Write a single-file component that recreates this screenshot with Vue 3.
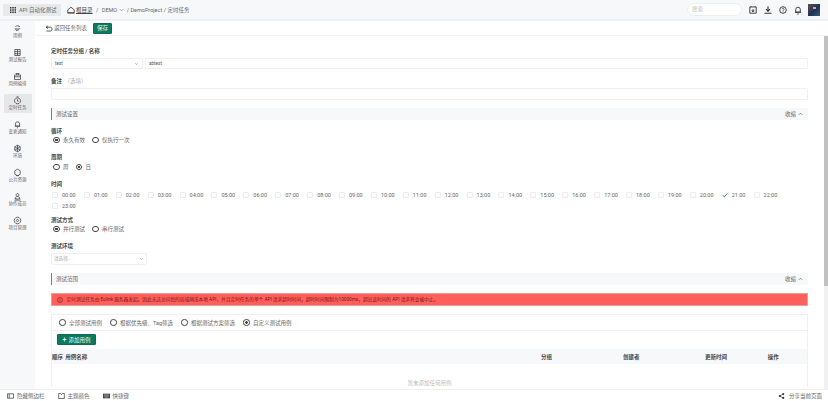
<script setup>
const navItems = [
  { label: '用例', d: 'M4 4.500c2-1.800 5-1.800 7 0M3 7.500c1 1 8 1 9 0M5 11l5-1.500M9 3l2 2M3.500 10.500l2-2', active: false },
  { label: '测试报告', d: 'M3 2.500h9v10H3zM3 6h9M3 9.500h9M7.500 2.500v10', active: false },
  { label: '用例编排', d: 'M2.500 5h10v7.500h-10zM4.500 2.500h6M2.500 8h10M6 2.500V5M9 2.500V5', active: false },
  { label: '定时任务', d: 'M7.500 3a5 5 0 1 0 .01 0M7.500 5.500v3h2M6 1.300h3', active: true },
  { label: '变更通知', d: 'M4 10V6.500a3.500 3.500 0 0 1 7 0V10zM3 10.500h9M6.500 13h2', active: false },
  { label: '环境', d: 'M7.500 2l4.500 2.600v5.800L7.500 13 3 10.400V4.600zM7.500 2v11M3 4.600l9 5.800M12 4.600l-9 5.800', active: false },
  { label: '公共资源', d: 'M7.500 2l4.500 2.600v5.800L7.500 13 3 10.400V4.600zM5 12.500h5', active: false },
  { label: '协作成员', d: 'M7.500 2.500a2.300 2.300 0 1 0 .01 0M3.500 11.500c0-2.500 1.500-4 4-4s4 1.500 4 4zM2.500 13.500h10', active: false },
  { label: '项目管理', d: 'M7.500 2a5.500 5.500 0 1 0 .01 0M7.500 5.500a2 2 0 1 0 .01 0', active: false },
]
const hours = Array.from({ length: 24 }, (_, i) => String(i).padStart(2, '0') + ':00')
const columns = [
  { label: '顺序', cls: 'c-order' },
  { label: '用例名称', cls: 'c-name' },
  { label: '分组', cls: 'c-group' },
  { label: '创建者', cls: 'c-owner' },
  { label: '更新时间', cls: 'c-time' },
  { label: '操作', cls: 'c-op' },
]
</script>

<template>
  <div class="app">
    <header class="topbar">
      <div class="brand">
        <svg class="grid-ic" viewBox="0 0 7 7"><path d="M0 0h1.700v1.700H0zM2.650 0h1.700v1.700h-1.700zM5.300 0H7v1.700H5.300zM0 2.650h1.700v1.700H0zM2.650 2.650h1.700v1.700h-1.700zM5.300 2.650H7v1.700H5.300zM0 5.300h1.700V7H0zM2.650 5.300h1.700V7h-1.700zM5.300 5.300H7V7H5.300z" fill="#333"/></svg>
        <span>API 自动化测试</span>
      </div>
      <nav class="crumbs">
        <svg class="home" viewBox="0 0 8 8"><path d="M.8 6.800V3.800L4 1.200l3.200 2.600v3zM.4 7h7.200" fill="none" stroke="#333" stroke-width=".8"/></svg>
        <span class="u">根目录</span><i>/</i><span>DEMO</span>
        <svg class="caret" viewBox="0 0 6 4"><path d="M1 1l2 2 2-2" fill="none" stroke="#777" stroke-width=".8"/></svg>
        <i class="tight">/</i><span>DemoProject</span><i class="tight">/</i><span>定时任务</span>
      </nav>
      <div class="search">搜索</div>
      <div class="tools">
        <svg viewBox="0 0 10 10"><path d="M1.800 2h6.400v6.200H1.800zM3 1.200V2M7 1.200V2M4.200 5h1.600v1.400H4.200z" fill="none" stroke="#333" stroke-width=".9"/></svg>
        <svg viewBox="0 0 10 10"><path d="M5 1.200v4.800M3 4.200 5 6.300l2-2.100M1.500 8.300h7" fill="none" stroke="#333" stroke-width="1.100"/></svg>
        <svg viewBox="0 0 10 10"><circle cx="5" cy="5" r="3.300" fill="none" stroke="#333" stroke-width=".9"/><path d="M3.900 4.200c.2-1.200 2.200-1.200 2.200 0 0 .8-1.100.8-1.100 1.700M5 6.400v.7" fill="none" stroke="#333" stroke-width=".7"/></svg>
        <svg viewBox="0 0 10 10"><path d="M2.700 7V4.500a2.300 2.300 0 0 1 4.600 0V7zM2 7.400h6M4.200 9h1.600" fill="none" stroke="#333" stroke-width=".9"/></svg>
        <div class="avatar"><b></b></div>
      </div>
    </header>

    <div class="body">
      <aside class="side">
        <div v-for="n in navItems" :key="n.label" class="nav" :class="{ active: n.active }">
          <svg viewBox="0 0 15 15"><path :d="n.d" fill="none" stroke="#444" stroke-width="1.300"/></svg>
          <span>{{ n.label }}</span>
        </div>
      </aside>

      <div class="view">
        <div class="subbar">
          <svg class="back" viewBox="0 0 8 7"><path d="M3 .8 1 2.200l2 1.400M1.200 2.200h4.300c2 0 2 3.800 0 3.800H1.500" fill="none" stroke="#333" stroke-width=".8"/></svg>
          <span class="back-txt">返回任务列表</span>
          <button class="btn save">保存</button>
        </div>

        <div class="scroller">
          <main class="content">
            <label class="lab l1">定时任务分组 / 名称</label>
            <div class="row-in">
              <div class="field sel"><span>test</span><svg viewBox="0 0 6 4"><path d="M1.500 1 3 2.800 4.500 1" fill="none" stroke="#888" stroke-width=".7"/></svg></div>
              <div class="field grow"><span>abtest</span></div>
            </div>

            <label class="lab l2">备注 <small>（选填）</small></label>
            <div class="field tall"></div>

            <div class="section"><span>测试设置</span><span class="fold">收缩 <svg viewBox="0 0 6 4"><path d="M1 3l2-2 2 2" fill="none" stroke="#555" stroke-width=".8"/></svg></span></div>

            <label class="lab l3">循环</label>
            <div class="radios"><span class="r on">永久有效</span><span class="r">仅执行一次</span></div>

            <label class="lab l4">周期</label>
            <div class="radios"><span class="r">周</span><span class="r on">日</span></div>

            <label class="lab l5">时间</label>
            <div class="hours">
              <span v-for="h in hours" :key="h" class="hour">
                <svg v-if="h === '21:00'" class="tick" viewBox="0 0 6 6"><path d="M.6 3.200 2.300 4.800 5.400 1.300" fill="none" stroke="#0b7a5e" stroke-width=".9"/></svg>
                <i v-else class="box"></i>{{ h }}
              </span>
            </div>

            <label class="lab l6">测试方式</label>
            <div class="radios"><span class="r on">并行测试</span><span class="r">串行测试</span></div>

            <label class="lab l7">测试环境</label>
            <div class="field env"><span class="ph">请选择...</span><svg viewBox="0 0 6 4"><path d="M1.500 1 3 2.800 4.500 1" fill="none" stroke="#888" stroke-width=".7"/></svg></div>

            <div class="section"><span>测试范围</span><span class="fold">收缩 <svg viewBox="0 0 6 4"><path d="M1 3l2-2 2 2" fill="none" stroke="#555" stroke-width=".8"/></svg></span></div>

            <div class="alert">
              <svg viewBox="0 0 7 7"><circle cx="3.500" cy="3.500" r="2.900" fill="none" stroke="#7a1512" stroke-width=".7"/><path d="M3.500 1.800v2.200M3.500 4.700v.6" stroke="#7a1512" stroke-width=".7"/></svg>
              <span>定时测试任务由 Eolink 服务器发起。因此无法访问您的局域网或本地 API，并且定时任务的单个 API 请求超时时间，超时时间限制为10000ms，超出该时间的 API 请求将会被中止。</span>
            </div>

            <section class="card">
              <div class="card-radios">
                <span class="r">全部测试用例</span><span class="r">根据优先级、Tag筛选</span><span class="r">根据测试方案筛选</span><span class="r on">自定义测试用例</span>
              </div>
              <div class="card-act"><button class="btn add"><b>+</b> 添加用例</button></div>
              <div class="thead"><span v-for="c in columns" :key="c.label" :class="c.cls">{{ c.label }}</span></div>
              <div class="empty">暂未添加任何用例</div>
            </section>
          </main>
          <div class="scrollbar"><div class="thumb"></div></div>
        </div>
      </div>
    </div>

    <footer class="foot">
      <span class="f"><svg viewBox="0 0 8 6"><path d="M.5.500h7v5h-7zM2.500.500v5" fill="none" stroke="#333" stroke-width=".8"/></svg>隐藏侧边栏</span>
      <span class="f"><svg viewBox="0 0 8 7"><path d="M.7.600h2L4 1.800 5.300.600h2v5.800H.7z" fill="none" stroke="#333" stroke-width=".8"/></svg>主题颜色</span>
      <span class="f"><svg viewBox="0 0 8 6"><path d="M0 .300h8v5.400H0z" fill="#444"/><path d="M1 1.700h6M1 3h6M2 4.400h4" stroke="#ddd" stroke-width=".5"/></svg>快捷键</span>
      <span class="f share"><svg viewBox="0 0 7 7"><circle cx="1.500" cy="3.500" r="1.300" fill="#333"/><circle cx="5.500" cy="1.300" r="1.200" fill="#333"/><circle cx="5.500" cy="5.700" r="1.200" fill="#333"/><path d="M1.500 3.500 5.500 1.300M1.500 3.500l4 2.200" stroke="#333" stroke-width=".7"/></svg>分享当前页面</span>
    </footer>
  </div>
</template>

<style scoped>
.app { width: 828px; height: 401px; display: flex; flex-direction: column; overflow: hidden; background: #fff; color: #444; font: 5.500px/8px Roboto, "Noto Sans CJK SC", sans-serif; white-space: nowrap; }
.topbar { flex: 0 0 21px; box-sizing: border-box; display: flex; align-items: center; background: #f7f8fa; border-bottom: 2px solid #eeeff2; padding: 0 8px 0 3px; }
.brand { width: 58px; height: 12px; background: #e8e9eb; display: flex; align-items: center; gap: 3px; padding-left: 7px; box-sizing: border-box; color: #666; }
.grid-ic { width: 6px; height: 6px; }
.crumbs { display: flex; align-items: center; margin-left: 6px; color: #666; }
.crumbs .home { width: 8px; height: 8px; margin-right: 1px; }
.crumbs .u { text-decoration: underline; color: #444; }
.crumbs i { font-style: normal; margin: 0 3.500px; }
.crumbs i.tight { margin: 0 1.500px; }
.caret { width: 5px; height: 4px; margin-left: 2px; margin-right: 1px; }
.search { margin-left: auto; width: 55px; height: 13px; border-radius: 7px; background: #fff; border: 1px solid #eceef1; box-sizing: border-box; padding-left: 4px; line-height: 11px; color: #bbb; }
.tools { display: flex; align-items: center; gap: 5px; margin-left: 6px; }
.tools svg { width: 10px; height: 10px; }
.avatar { width: 12px; height: 12px; background: linear-gradient(135deg, #6a4a46, #1f3355 55%, #3b5d7c); position: relative; }
.avatar b { position: absolute; left: 5px; top: 3px; width: 3px; height: 2px; background: #a8b4c4; }
.body { flex: 1; display: flex; min-height: 0; }
.side { flex: 0 0 35px; background: #f7f8fa; display: flex; flex-direction: column; align-items: center; padding-top: 1px; box-sizing: border-box; }
.nav { width: 28px; height: 24px; box-sizing: border-box; padding-top: 2px; display: flex; flex-direction: column; align-items: center; font-size: 4.500px; line-height: 6px; color: #666; border-radius: 1px; flex: none; }
.nav svg { width: 9px; height: 9px; }
.nav.active { background: #e6e7e9; height: 19px; margin-bottom: 5px; }
.view { flex: 1; display: flex; flex-direction: column; min-width: 0; }
.subbar { flex: 0 0 15px; box-sizing: border-box; display: flex; align-items: center; padding-left: 10px; border-bottom: 1px solid #f2f2f3; color: #666; }
.back { width: 8px; height: 7px; margin-right: 1px; }
.back-txt { width: 33px; }
.btn { border: 1px solid #0c6b52; background: #0b7a5e; color: #e8f5f0; border-radius: 1px; font: inherit; padding: 0; }
.save { width: 19px; height: 11px; margin-left: 6px; line-height: 7px; }
.scroller { flex: 1; min-height: 0; overflow: hidden; display: flex; }
.content { flex: 1; min-width: 0; padding: 0 16px; }
.scrollbar { flex: 0 0 4px; background: #f1f1f1; }
.thumb { height: 250px; background: #c1c1c1; }
.lab { display: block; font-weight: 700; line-height: 8px; color: #444; }
.lab small { font-weight: 400; font-size: 5.500px; color: #aaa; margin-left: 1px; }
.l1 { padding-top: 11px; margin-bottom: 3px; }
.l2 { margin-top: 8px; margin-bottom: 3px; }
.l3 { margin-top: 7px; }
.l4 { margin-top: 8px; margin-bottom: 1px; }
.l5 { margin-top: 8px; margin-bottom: 2px; }
.l6 { margin-top: 5px; }
.l7 { margin-top: 8px; margin-bottom: 3px; }
.row-in { display: flex; gap: 2px; }
.field { height: 11px; box-sizing: border-box; border: 1px solid #f0f0f1; border-radius: 1px; display: flex; align-items: center; justify-content: space-between; padding: 0 3px; font-size: 4.600px; color: #555; background: #fff; }
.field svg { width: 5px; height: 4px; }
.sel { width: 92px; }
.grow { flex: 1; }
.tall { height: 12px; }
.env { width: 96px; height: 12px; padding: 0 2px; }
.ph { color: #aaa; }
.section { height: 12px; margin-top: 8px; background: #f7f8fa; border-left: 1px solid #3f9c82; display: flex; align-items: center; justify-content: space-between; padding: 0 5px 0 4px; color: #666; }
.fold { display: flex; align-items: center; gap: 2px; }
.fold svg { width: 5px; height: 4px; }
.radios { display: flex; gap: 7px; height: 10px; align-items: center; color: #666; padding-left: 2px; }
.r { display: inline-flex; align-items: center; }
.r::before { content: ""; width: 6.500px; height: 6.500px; box-sizing: border-box; border: 1px solid #444; border-radius: 50%; margin-right: 3.500px; background: #fff; }
.r.on::before { background: radial-gradient(circle, #444 0 1.200px, #fff 1.500px); }
.hours { display: flex; flex-wrap: wrap; padding-left: 1px; }
.hour { width: 31.900px; height: 10.500px; display: flex; align-items: center; color: #666; }
.box { width: 6px; height: 6px; box-sizing: border-box; border: 1px solid #ececee; border-radius: 1px; margin-right: 4px; }
.tick { width: 6px; height: 6px; margin-right: 4px; }
.alert { margin-top: 8px; height: 13px; box-sizing: border-box; background: #ff5f5a; border: 1px solid #e8a09d; display: flex; align-items: center; gap: 3.500px; padding-left: 5px; color: #7a1512; font-size: 4.700px; }
.alert svg { width: 6px; height: 6px; flex: none; }
.card { margin-top: 8px; border: 1px solid #f0f0f2; border-bottom: 0; }
.card-radios { height: 15px; display: flex; align-items: center; gap: 8px; padding-left: 7px; border-bottom: 1px solid #f0f0f2; color: #666; }
.card-act { padding: 3px 0 0 5px; height: 16px; box-sizing: border-box; }
.add { width: 39px; height: 11px; display: flex; align-items: center; justify-content: center; gap: 2px; line-height: 8px; }
.add b { font-size: 7px; }
.thead { height: 15px; margin-top: 2px; background: #f7f8fa; display: flex; align-items: center; font-weight: 700; color: #444; }
.c-order { width: 13.300px; }
.c-name { width: 475.700px; }
.c-group { width: 82px; }
.c-owner { width: 82px; }
.c-time { width: 62.700px; }
.empty { text-align: center; color: #bbb; padding-top: 15px; }
.foot { flex: 0 0 12px; box-sizing: border-box; border-top: 1px solid #eeeff1; background: #fff; display: flex; align-items: center; padding: 0 6px 0 7px; color: #666; z-index: 1; }
.f { display: flex; align-items: center; gap: 3px; margin-right: 13px; }
.f svg { width: 7px; height: 6px; }
.share { margin-left: auto; margin-right: 0; gap: 4px; }
</style>

<style>
html, body { margin: 0; overflow: hidden; }
</style>
